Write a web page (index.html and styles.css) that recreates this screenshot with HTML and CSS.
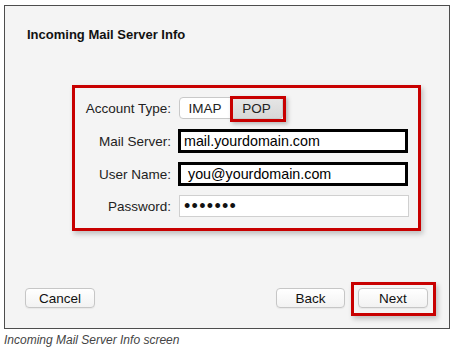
FILE: index.html
```html
<!DOCTYPE html>
<html lang="en">
<head>
<meta charset="utf-8">
<title>Incoming Mail Server Info</title>
<link rel="stylesheet" href="styles.css">
</head>
<body>
<div class="figure">
  <div class="window">
    <h1 class="title">Incoming Mail Server Info</h1>
    <div class="form highlight">
      <div class="label">Account Type:</div>
      <div class="segmented">
        <span class="seg seg-first">IMAP</span>
        <span class="seg seg-selected">POP</span>
      </div>
      <div class="label">Mail Server:</div>
      <div class="field field-strong">mail.yourdomain.com</div>
      <div class="label">User Name:</div>
      <div class="field field-strong field-user">you@yourdomain.com</div>
      <div class="label">Password:</div>
      <div class="field field-plain"><span class="dots">&#8226;&#8226;&#8226;&#8226;&#8226;&#8226;&#8226;</span></div>
    </div>
    <div class="actions">
      <button class="btn btn-cancel">Cancel</button>
      <button class="btn btn-back">Back</button>
      <div class="next-wrap highlight">
        <button class="btn btn-next">Next</button>
      </div>
    </div>
  </div>
  <p class="caption">Incoming Mail Server Info screen</p>
</div>
</body>
</html>
```

FILE: styles.css
```css
* {
  box-sizing: border-box;
}

body {
  margin: 0;
  background: #fff;
  font-family: "Liberation Sans", Arial, sans-serif;
}

.figure {
  padding: 5px 0 0 4px;
}

.window {
  width: 446px;
  height: 324px;
  border: 1px solid #4d4d4d;
  background: #f4f4f4;
  display: flex;
  flex-direction: column;
}

.title {
  margin: 0;
  padding: 21px 0 0 22px;
  font-size: 13px;
  line-height: 15px;
  font-weight: bold;
  color: #111;
}

.highlight {
  border: 3px solid #c80000;
  box-shadow: 2px 3px 5px rgba(0, 0, 0, 0.22);
}

.form {
  margin: 43px 0 0 67px;
  width: 349px;
  height: 146px;
  padding-top: 8px;
  display: grid;
  grid-template-columns: 96px 230px;
  grid-template-rows: 24px 24px 24px 22px;
  column-gap: 7px;
  row-gap: 9px;
  align-content: start;
  align-items: center;
}

.label {
  text-align: right;
  font-size: 13.5px;
  color: #222;
}

.segmented {
  display: flex;
  margin-left: 1px;
  justify-self: start;
}

.seg {
  width: 52px;
  height: 22px;
  display: flex;
  align-items: center;
  justify-content: center;
  font-size: 13.5px;
  color: #222;
  background: #fff;
  border: 1px solid #c9c9c9;
}

.seg-first {
  border-radius: 4px 0 0 4px;
}

.seg-selected {
  position: relative;
  border-left: none;
  border-radius: 0 4px 4px 0;
  background: linear-gradient(#e6e6e6, #d7d7d7);
}

.seg-selected::after {
  content: "";
  position: absolute;
  left: -1px;
  top: -2px;
  right: -4px;
  bottom: -4px;
  border: 3px solid #c80000;
  box-shadow: 2px 2px 4px rgba(0, 0, 0, 0.25);
}

.field {
  height: 24px;
  display: flex;
  align-items: center;
  background: #fff;
  font-size: 14.3px;
  color: #000;
  padding-left: 3px;
  white-space: nowrap;
}

.field-strong {
  border: 3px solid #000;
}

.field-user {
  padding-left: 7px;
}

.field-plain {
  height: 22px;
  width: 230px;
  margin-left: 1px;
  border: 1px solid #d0d0d0;
  padding-left: 4px;
}

.dots {
  font-size: 18px;
  letter-spacing: 1.3px;
  line-height: 1;
  color: #111;
}

.actions {
  margin-top: auto;
  display: flex;
  align-items: flex-start;
  padding: 0 13px 12px 20px;
}

.btn {
  height: 20px;
  padding: 0;
  font-family: "Liberation Sans", Arial, sans-serif;
  font-size: 13.5px;
  color: #111;
  background: linear-gradient(#ffffff, #f2f2f2);
  border: 1px solid #c6c6c6;
  border-radius: 4px;
  box-shadow: 0 1px 1px rgba(0, 0, 0, 0.05);
}

.btn-cancel {
  width: 70px;
  margin-top: 6px;
}

.btn-back {
  width: 69px;
  margin-top: 6px;
  margin-left: auto;
  margin-right: 6px;
}

.next-wrap {
  width: 85px;
  padding: 3px 5px 5px 4px;
}

.btn-next {
  width: 70px;
  display: block;
}

.caption {
  margin: 4px 0 0 0;
  font-size: 12px;
  font-style: italic;
  color: #444;
}
```
